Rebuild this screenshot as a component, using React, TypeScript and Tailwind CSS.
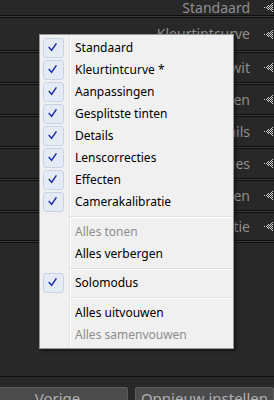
import React from "react";

const rows = [
  { label: "Standaard", h: "h-[15px]" },
  { label: "Kleurtintcurve", h: "h-[32px]" },
  { label: "HSL / Kleur / Zwart-wit", h: "h-[29px]" },
  { label: "Gesplitste tinten", h: "h-[29px]" },
  { label: "Details", h: "h-[29px]" },
  { label: "Lenscorrecties", h: "h-[29px]" },
  { label: "Effecten", h: "h-[29px]" },
  { label: "Camerakalibratie", h: "h-[27px]" },
];

function Tri() {
  const dots: [number, number][] = [];
  for (let x = 0; x < 9; x++) {
    for (let y = 0; y < 9; y++) {
      if (Math.abs(y - 4) <= x / 2 && (x + y) % 2 === 0) dots.push([x, y]);
    }
  }
  return (
    <svg width="9" height="9" viewBox="0 0 9 9" className="ml-[14px] mr-[1px] shrink-0">
      {dots.map(([x, y]) => (
        <rect key={`${x}-${y}`} x={x} y={y} width="1" height="1" fill="#cfcfcf" />
      ))}
    </svg>
  );
}

function Sep() {
  return (
    <div className="h-[3px] shrink-0 border-t border-b border-[#0e0e0e] bg-[#3a3a3a]" />
  );
}

type Item =
  | { type: "item"; label: string; checked?: boolean; disabled?: boolean }
  | { type: "sep"; h: string };

const items: Item[] = [
  { type: "item", label: "Standaard", checked: true },
  { type: "item", label: "Kleurtintcurve *", checked: true },
  { type: "item", label: "Aanpassingen", checked: true },
  { type: "item", label: "Gesplitste tinten", checked: true },
  { type: "item", label: "Details", checked: true },
  { type: "item", label: "Lenscorrecties", checked: true },
  { type: "item", label: "Effecten", checked: true },
  { type: "item", label: "Camerakalibratie", checked: true },
  { type: "sep", h: "h-[8px]" },
  { type: "item", label: "Alles tonen", disabled: true },
  { type: "item", label: "Alles verbergen" },
  { type: "sep", h: "h-[7px]" },
  { type: "item", label: "Solomodus", checked: true },
  { type: "sep", h: "h-[8px]" },
  { type: "item", label: "Alles uitvouwen" },
  { type: "item", label: "Alles samenvouwen", disabled: true },
];

function Check() {
  return (
    <div className="w-[21px] h-[20px] rounded-[3px] border border-[#c6d3e6] bg-[#e5ebf5] flex items-center justify-center">
      <svg width="21" height="20" viewBox="0 0 21 20">
        <path d="M5.8 9.6 L8.4 12.6 L13.2 5.6" fill="none" stroke="#1b2bb0" strokeWidth="1.7" strokeLinecap="square" strokeLinejoin="miter" />
      </svg>
    </div>
  );
}

export default function App() {
  return (
    <div
      className="relative w-[274px] h-[400px] overflow-hidden bg-[#282828] flex flex-col"
      style={{ fontFamily: '"Noto Sans", "Liberation Sans", sans-serif' }}
    >
      {rows.map((r) => (
        <React.Fragment key={r.label}>
          <div className={`${r.h} shrink-0 flex items-center justify-end text-[14px] text-[#8f8f8f] leading-none`}>
            <span className="whitespace-nowrap">{r.label}</span>
            <Tri />
          </div>
          <Sep />
        </React.Fragment>
      ))}
      <div className="h-[133px] shrink-0" />
      <div className="h-[1px] bg-[#0e0e0e] shrink-0" />
      <div className="h-[10px] shrink-0" />
      <div className="flex gap-[7px] -ml-[13px] shrink-0">
        <div className="w-[142px] h-[30px] bg-[#4b4b4b] border border-[#5c5c5c] rounded-[2px] flex justify-center pt-[3px] text-[15px] text-[#b0b0b0] leading-none">
          Vorige
        </div>
        <div className="w-[140px] h-[30px] bg-[#4b4b4b] border border-[#5c5c5c] rounded-[2px] flex justify-center pt-[3px] text-[15px] text-[#b0b0b0] leading-none whitespace-nowrap">
          Opnieuw instellen
        </div>
      </div>

      <div className="absolute left-[39px] top-[34px] w-[195px] bg-[#f0f0f0] border border-[#979797] py-[2px] pl-[1px] pr-[1px] shadow-[2px_2px_3px_rgba(0,0,0,0.45)]">
        <div className="absolute left-[29px] top-0 bottom-0 w-[1px] bg-[#e2e3e3]" />
        <div className="absolute left-[30px] top-0 bottom-0 w-[1px] bg-[#ffffff]" />
        {items.map((it, i) =>
          it.type === "sep" ? (
            <div key={i} className={`${it.h} relative flex items-center pl-[29px]`}>
              <div className="w-full">
                <div className="h-[1px] bg-[#e0e0e0]" />
                <div className="h-[1px] bg-[#ffffff]" />
              </div>
            </div>
          ) : (
            <div key={i} className="relative h-[22px] flex items-center">
              <div className="w-[29px] pl-[2px] flex items-center shrink-0">
                {it.checked ? <Check /> : null}
              </div>
              <span
                className={`ml-[5px] text-[12px] leading-none whitespace-nowrap ${
                  it.disabled ? "text-[#8d8d8d]" : "text-[#000000]"
                }`}
              >
                {it.label}
              </span>
            </div>
          )
        )}
      </div>
    </div>
  );
}
